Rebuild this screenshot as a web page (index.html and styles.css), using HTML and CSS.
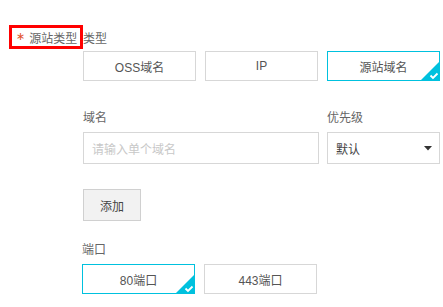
FILE: index.html
```html
<!DOCTYPE html>
<html lang="zh-CN">
<head>
<meta charset="utf-8">
<title>源站类型</title>
<link rel="stylesheet" href="styles.css">
</head>
<body>
<div class="form">
  <div class="head-row">
    <div class="mark"><span class="req">∗</span><span class="mark-text">源站类型</span></div>
    <span class="label-inline">类型</span>
  </div>
  <div class="choices">
    <div class="choice">OSS域名</div>
    <div class="choice">IP</div>
    <div class="choice selected">源站域名<svg class="tick" width="20" height="20" viewBox="0 0 20 20"><path d="M20 0 L20 20 L0 20 Z" fill="#00c1de"/><path d="M10.5 14.5 L13 17 L17.5 12.5" fill="none" stroke="#fff" stroke-width="1.8"/></svg></div>
  </div>

  <div class="domain-row">
    <div class="field field-domain">
      <div class="label">域名</div>
      <div class="input"><span class="placeholder">请输入单个域名</span></div>
    </div>
    <div class="field field-priority">
      <div class="label">优先级</div>
      <div class="select"><span>默认</span><svg class="caret" width="8" height="5" viewBox="0 0 8 5"><path d="M0 0 L8 0 L4 4.5 Z" fill="#333"/></svg></div>
    </div>
  </div>

  <div class="add-btn">添加</div>

  <div class="ports">
    <div class="label">端口</div>
    <div class="choices">
      <div class="choice selected">80端口<svg class="tick" width="20" height="20" viewBox="0 0 20 20"><path d="M20 0 L20 20 L0 20 Z" fill="#00c1de"/><path d="M10.5 14.5 L13 17 L17.5 12.5" fill="none" stroke="#fff" stroke-width="1.8"/></svg></div>
      <div class="choice">443端口</div>
    </div>
  </div>
</div>
</body>
</html>
```
FILE: styles.css
```css
html, body {
  margin: 0;
  padding: 0;
  background: #fff;
}
body {
  font-family: "Liberation Sans", "Noto Sans CJK SC", sans-serif;
  font-size: 12px;
  color: #333;
}
.form {
  padding-top: 25px;
  padding-left: 83px;
}
.head-row {
  display: flex;
  align-items: center;
  margin-left: -74px;
  height: 24px;
}
.mark {
  box-sizing: border-box;
  width: 74px;
  height: 24px;
  border: 3px solid #f00;
  display: flex;
  align-items: center;
  padding-left: 4px;
  color: #666;
}
.req {
  color: #e2532b;
  margin-right: 4px;
  font-family: "DejaVu Sans", sans-serif;
  font-size: 11px;
  line-height: 12px;
}
.label-inline {
  color: #666;
}
.choices {
  display: flex;
  gap: 9px;
  margin-top: 2px;
}
.choice {
  position: relative;
  box-sizing: border-box;
  width: 113px;
  height: 30px;
  border: 1px solid #d7d7d7;
  display: flex;
  align-items: center;
  justify-content: center;
  color: #555;
  background: #fff;
  overflow: hidden;
}
.choice.selected {
  border-color: #00c1de;
}
.tick {
  position: absolute;
  right: -1px;
  bottom: -1px;
}
.domain-row {
  display: flex;
  gap: 8px;
  margin-top: 28px;
}
.label {
  color: #666;
  height: 18px;
  line-height: 18px;
  margin-bottom: 5px;
}
.input {
  box-sizing: border-box;
  width: 236px;
  height: 32px;
  border: 1px solid #d7d7d7;
  display: flex;
  align-items: center;
  padding-left: 8px;
}
.placeholder {
  color: #c8c8c8;
}
.select {
  box-sizing: border-box;
  width: 113px;
  height: 32px;
  border: 1px solid #d7d7d7;
  display: flex;
  align-items: center;
  justify-content: space-between;
  padding: 0 7px 0 8px;
  color: #444;
}
.add-btn {
  box-sizing: border-box;
  width: 58px;
  height: 32px;
  margin-top: 25px;
  border: 1px solid #d0d0d0;
  background: #f2f2f2;
  display: flex;
  align-items: center;
  justify-content: center;
  color: #444;
}
.ports {
  margin-top: 20px;
  margin-left: -1px;
}
.ports .choices {
  margin-top: 0;
}
```
